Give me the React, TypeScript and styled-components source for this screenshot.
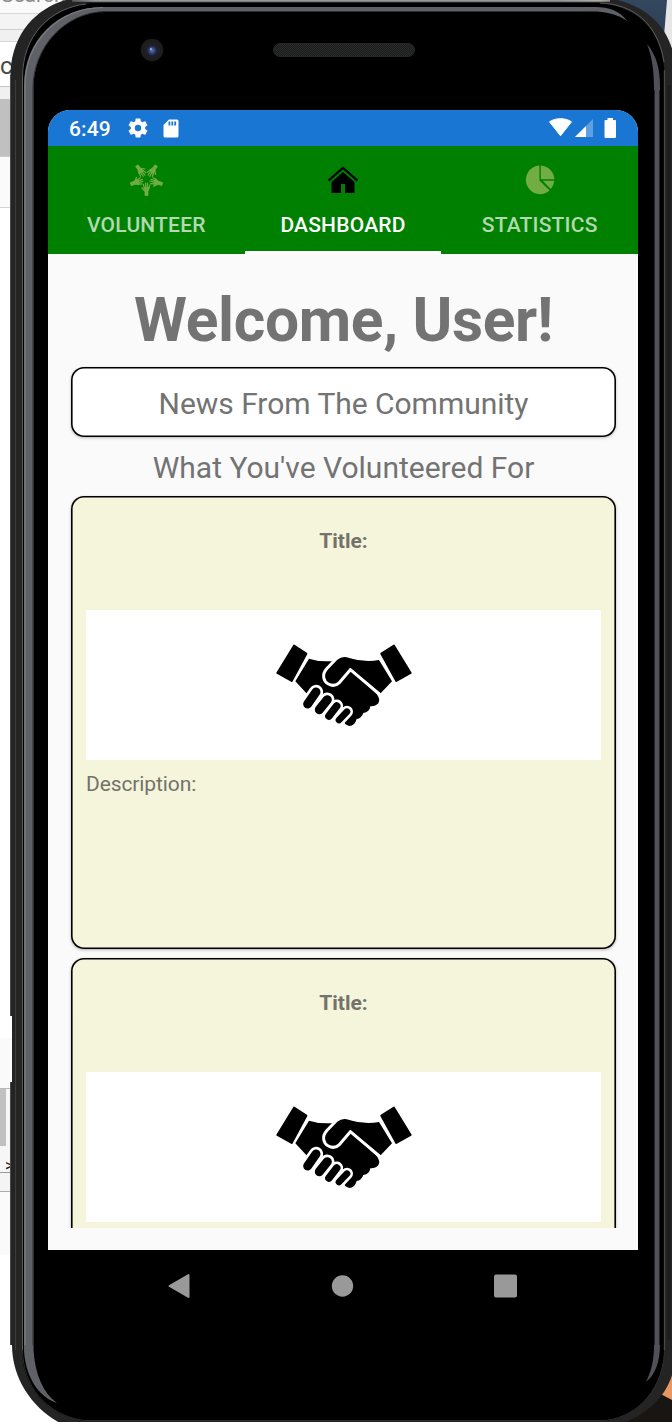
import React from "react";
import styled, { createGlobalStyle } from "styled-components";

const GlobalStyle = createGlobalStyle`
  * { box-sizing: border-box; }
  body { margin: 0; background: #fff; font-family: Roboto, sans-serif; }
`;

const Page = styled.div`
  position: relative;
  width: 672px;
  height: 1422px;
  overflow: hidden;
  background: #fff;
`;

/* Slice of the desktop window visible behind the device */
const WindowEdge = styled.div`
  position: absolute;
  left: 0;
  top: 0;
  width: 100px;
  display: flex;
  flex-direction: column;
`;

const Strip = styled.div<{ $h: number; $bg?: string; $line?: string }>`
  flex: none;
  height: ${(p) => p.$h}px;
  background: ${(p) => p.$bg ?? "#fff"};
  border-bottom: ${(p) => (p.$line ? `1px solid ${p.$line}` : "0")};
  overflow: hidden;
  color: #444;
  font: 22px/1 Roboto, sans-serif;
`;

const SearchText = styled.div`
  margin: -15px 0 0 1px;
  color: #8c8c8c;
  font-size: 21px;
  line-height: 21px;
`;

const EdgeText = styled.div`
  padding-top: 12px;
  font-size: 24px;
  color: #4a4a4a;
`;

const ScrollThumb = styled.div`
  width: 6px;
  height: 57px;
  background: #c0c0c0;
`;

const Arrow = styled.div`
  padding: 12px 0 0 5px;
  font-size: 16px;
  color: #222;
`;

const Shell = styled.svg`
  position: absolute;
  inset: 0;
`;

const Screen = styled.main`
  position: relative;
  width: 590px;
  height: 1140px;
  margin: 110px 0 0 48px;
  display: flex;
  flex-direction: column;
  overflow: hidden;
  border-radius: 22px 22px 0 0;
  background: #fafafa;
`;

const PageFlow = styled.div`
  display: flow-root;
`;

const StatusBar = styled.header`
  flex: none;
  display: flex;
  align-items: center;
  height: 36px;
  padding: 0 21px;
  background: #1976d2;
  color: #fff;
`;

const Clock = styled.span`
  width: 58px;
  font-size: 21px;
  font-weight: 500;
  line-height: 36px;
  letter-spacing: 0.1px;
  padding-top: 1px;
`;

const StatusIcons = styled.div<{ $right?: boolean }>`
  display: flex;
  align-items: center;
  gap: 14px;
  margin-left: ${(p) => (p.$right ? "auto" : "0")};
`;

const Tabs = styled.nav`
  flex: none;
  display: grid;
  grid-template-columns: repeat(3, 1fr);
  height: 108px;
  background: #008000;
`;

const Tab = styled.a<{ $active?: boolean }>`
  display: flex;
  flex-direction: column;
  align-items: center;
  padding-top: 16px;
  border-bottom: 3px solid ${(p) => (p.$active ? "#fff" : "transparent")};
  color: ${(p) => (p.$active ? "#fff" : "#b2d9b2")};
  font-size: 21px;
  font-weight: 500;
  line-height: 25px;
  letter-spacing: 0.2px;
  svg { display: block; margin-bottom: 15px; }
`;

const Feed = styled.section`
  flex: none;
  height: 974px;
  padding: 0 22px 0 23px;
  overflow: hidden;
  color: #737373;
  text-align: center;
`;

const Heading = styled.h1`
  margin: 31px 0 11px;
  font-size: 60.5px;
  line-height: 71px;
  font-weight: 700;
  letter-spacing: -0.33px;
  white-space: nowrap;
`;

const NewsCard = styled.div`
  height: 70px;
  border-radius: 13px;
  background: #fff;
  box-shadow: inset 0 0 0 1.6px #000, 0 1px 3px rgba(0, 0, 0, 0.25);
  font-size: 30px;
  line-height: 73px;
  letter-spacing: -0.03px;
`;

const Subheading = styled.h2`
  margin: 0;
  height: 59px;
  padding-top: 13px;
  font-size: 30px;
  line-height: 36px;
  font-weight: 400;
`;

const EventCard = styled.article`
  height: 453px;
  margin-bottom: 9px;
  padding: 33px 15px 0;
  border-radius: 13px;
  background: #f5f5dc;
  box-shadow: inset 0 0 0 1.6px #000, 0 1px 3px rgba(0, 0, 0, 0.3);
  color: #73736a;
`;

const EventTitle = styled.h3`
  margin: 0;
  height: 81px;
  font-size: 21px;
  line-height: 25px;
  font-weight: 700;
`;

const Picture = styled.div`
  display: flex;
  justify-content: center;
  align-items: center;
  height: 150px;
  padding-left: 2px;
  background: #fff;
`;

const Description = styled.p`
  margin: 12px 0 0;
  text-align: left;
  font-size: 21px;
  line-height: 25px;
  letter-spacing: -0.1px;
`;

const SystemNav = styled.footer`
  position: relative;
  display: flex;
  justify-content: space-between;
  align-items: center;
  width: 350px;
  height: 72px;
  margin-left: 168px;
`;

function DeviceShell() {
  return (
    <Shell width="672" height="1422" viewBox="0 0 672 1422">
      <defs>
        <linearGradient id="topRim" x1="60" x2="640" y1="0" y2="0" gradientUnits="userSpaceOnUse">
          <stop offset="0" stopColor="#333" />
          <stop offset="0.06" stopColor="#999" />
          <stop offset="0.86" stopColor="#999" />
          <stop offset="0.93" stopColor="#aaa" />
          <stop offset="1" stopColor="#333" />
        </linearGradient>
        <linearGradient id="photo" x1="0" x2="0" y1="0" y2="1">
          <stop offset="0" stopColor="#33475f" />
          <stop offset="1" stopColor="#263a50" />
        </linearGradient>
        <radialGradient id="lens">
          <stop offset="0" stopColor="#6675a8" />
          <stop offset="0.35" stopColor="#36477c" />
          <stop offset="0.65" stopColor="#182244" />
          <stop offset="0.8" stopColor="#1d1e24" />
          <stop offset="1" stopColor="#242424" />
        </radialGradient>
        <pattern id="mesh" width="2" height="2" patternUnits="userSpaceOnUse">
          <path d="M0 0h2v2H0z" fill="#191b1b" />
          <path d="M0 0h1v1H0zM1 1h1v1H1z" fill="#2b2d2d" />
        </pattern>
      </defs>
      <path d="M600 0H668L663 60H600z" fill="url(#photo)" />
      <path d="M667 0H672V60H662z" fill="#e6e6e6" />
      <path d="M620 1370H672V1422H620z" fill="#181513" />
      <path d="M655 1350H672V1400L655 1391z" fill="#e99762" />

      <path
        d="M10.500 72V1016H12V1082H10.500V1345H12C12 1380 34 1410 62 1424H620C650 1414 675 1390 675 1355V62C670 26 645 4 608 -2H74C42 4 13 28 10.500 72z"
        fill="#242424"
      />
      <path d="M10.500 75V1016M10.500 1082V1345" stroke="#4a4a4a" />
      <path d="M15.500 80V1350" stroke="#3b3b3b" />
      <path d="M669 85V1340" stroke="#1c1c1c" strokeWidth="3" />
      <path d="M72 0.600H610" fill="none" stroke="url(#topRim)" strokeWidth="2.500" />
      <path
        d="M22 1350V78C22 36 51 8 90 3H592C636 3 664 30 664.500 76V1345C664 1388 640 1416 606 1421H84C48 1416 22 1388 22 1350z"
        fill="#000"
      />
      <path d="M22.500 1350V78C22.500 34 51 8 86 4" fill="none" stroke="#5a5b5e" />
      <path d="M22.500 1350C23 1386 46 1415 84 1420.500H606C640 1416 664 1386 664.500 1350" fill="none" stroke="#2c2c2c" />
      <path d="M664.500 70V1350" fill="none" stroke="#494949" strokeWidth="1.300" />
      <path d="M600 3C634 4 658 24 664 62" fill="none" stroke="#5a5a5a" />
      <path
        d="M24 1350V86C24 40 58 7 103 7H595C609 7 620 11 627 21C617 14 606 11.500 592 11.500H106C64 12 33.500 48 33.500 88V1350C35 1374 43 1393 57 1403C36 1396 25 1373 24 1350z"
        fill="#606166"
      />
      <path d="M25 1345V86C25 42 58 8 103 7.500" fill="none" stroke="#7c7d81" strokeWidth="1.200" />
      <path d="M33 1345V88C33 48 64 12 106 11.500H590" fill="none" stroke="#2b2e33" />
      <path
        d="M647 44C657 56 660 70 660 86V1345C660 1362 655 1375 646 1382C652 1370 654 1358 654 1345V90C654 70 652 57 647 44z"
        fill="#505156"
      />
      <path d="M654.500 90V1345M659.500 90V1345" stroke="#242529" />

      <circle cx="152" cy="50" r="11.300" fill="#1d1d1d" />
      <circle cx="152" cy="50.500" r="7.500" fill="url(#lens)" />
      <circle cx="151" cy="49" r="1.200" fill="#8e9bc4" />
      <rect x="273.500" y="43.500" width="141" height="13" rx="6.500" fill="url(#mesh)" stroke="#262626" />
    </Shell>
  );
}

function GearIcon() {
  return (
    <svg width="22" height="22" viewBox="1 1 22 22" fill="#fff">
      <path d="M19.14 12.94c.04-.3.06-.61.06-.94s-.02-.64-.07-.94l2.03-1.58a.5.5 0 0 0 .12-.61l-1.92-3.32a.5.5 0 0 0-.59-.22l-2.39.96a7 7 0 0 0-1.62-.94l-.36-2.54a.5.5 0 0 0-.48-.41h-3.84a.5.5 0 0 0-.47.41l-.36 2.54c-.59.24-1.13.57-1.62.94l-2.39-.96a.5.5 0 0 0-.59.22L2.74 8.87a.5.5 0 0 0 .12.61l2.03 1.58a6 6 0 0 0 0 1.88l-2.03 1.58a.5.5 0 0 0-.12.61l1.92 3.32c.12.22.37.29.59.22l2.39-.96c.5.38 1.03.7 1.62.94l.36 2.54c.05.24.24.41.48.41h3.84c.24 0 .44-.17.47-.41l.36-2.54a7 7 0 0 0 1.62-.94l2.39.96c.22.08.47 0 .59-.22l1.92-3.32a.5.5 0 0 0-.12-.61zM12 15.2A3.2 3.2 0 1 1 12 8.8a3.200 3.200 0 0 1 0 6.400z" />
    </svg>
  );
}

function SdCardIcon() {
  return (
    <svg width="16" height="19" viewBox="0 0 16 19">
      <path d="M6 .5h8a1.500 1.500 0 0 1 1.500 1.500v15a1.500 1.500 0 0 1-1.500 1.500H2A1.500 1.500 0 0 1 .5 17V6z" fill="#fff" />
      <path d="M5.500 2.500h1.800v4H5.500zM8.400 2.500h1.800v4H8.400zM11.300 2.500h1.800v4h-1.800z" fill="#1976d2" />
    </svg>
  );
}

function SignalIcons() {
  return (
    <svg width="69" height="22" viewBox="0 0 69 22">
      <path d="M1.500 4.800C7.500.6 17.500.6 23.500 4.800L12.500 18.800z" fill="#fff" stroke="#fff" strokeLinejoin="round" />
      <path d="M45 2V20H27z" fill="#609fe0" />
      <path d="M38 9V20H27z" fill="#fff" />
      <path d="M59.500 1H65v2h2a1 1 0 0 1 1 1v16a1 1 0 0 1-1 1h-9.500a1 1 0 0 1-1-1V4a1 1 0 0 1 1-1h2z" fill="#fff" />
    </svg>
  );
}

function VolunteerIcon() {
  return (
    <svg width="36" height="36" viewBox="-18.500 -17 36 36">
      <defs>
        <g id="hand" stroke="#72ad43" fill="#72ad43" strokeLinecap="round" strokeLinejoin="round">
          <path d="M-2.600 8.800L-1.500 12.500V16.500H1.500V12.500L2.900 8.800z" strokeWidth=".8" />
          <path d="M-2 9.500L-3.200 5.400M-.7 9L-.9 4M.9 9L1.100 4.200M2.200 9.500L3.300 5.800M-1.400 12.300L-4.600 9" strokeWidth="1.200" />
        </g>
      </defs>
      {[0, 72, 144, 216, 288].map((turn) => (
        <use key={turn} href="#hand" transform={`rotate(${turn})`} />
      ))}
    </svg>
  );
}

function HomeIcon() {
  return (
    <svg width="36" height="36" viewBox="0 0 36 36">
      <path d="M3.500 18.700L18 6L32.500 18.700" fill="none" stroke="#000" strokeWidth="2.300" />
      <path d="M18 10L29.500 20V31H20V22H16V31H6.500V20z" fill="#000" />
    </svg>
  );
}

function PieIcon() {
  return (
    <svg width="36" height="36" viewBox="0 0 36 36" fill="#72ad43">
      <path d="M17.400 3.600V18.400L27.600 28.600A14.300 14.300 0 1 1 17.400 3.600z" />
      <path d="M18.800 3.600A14.300 14.300 0 0 1 32.300 17.200H18.800z" />
      <path d="M20.800 18.700H32.300A14.300 14.300 0 0 1 28.700 27.100z" />
    </svg>
  );
}

function Handshake() {
  const fingers = [
    { d: "M168 186L143 222", w: 27 },
    { d: "M202 209L178 239", w: 27 },
    { d: "M230 228L207 258", w: 23 },
    { d: "M261 245L237 270", w: 20 },
  ];
  return (
    <svg width="170" height="110" viewBox="0 0 510 330" strokeLinejoin="round" strokeLinecap="round">
      <path d="M102 47L139 71L95 153L52 129z" stroke="#000" strokeWidth="6" />
      <path d="M402 47L452 129L409 153L364 71z" stroke="#000" strokeWidth="6" />
      <path d="M147 86Q180 97 223 93L270 118L350 192Q362 207 355 220Q346 230 331 229Q329 246 310 249Q304 266 290 267Q284 288 268 288Q255 285 253 277L190 240L138 188L106 154z" />
      <path d="M357 90Q310 98 260 82Q245 79 232 89L202 120Q188 138 197 154Q216 174 235 159L271 115L362 190L396 154z" />
      <path d="M223 92L200 116C184 134 191 155 205 162C218 169 231 165 239 157L271 119L359 193" fill="none" stroke="#fff" strokeWidth="9" />
      {fingers.map((f) => (
        <path key={f.d} d={f.d} fill="none" stroke="#fff" strokeWidth={f.w + 16} />
      ))}
      {fingers.map((f) => (
        <path key={f.w + f.d} d={f.d} fill="none" stroke="#000" strokeWidth={f.w} />
      ))}
    </svg>
  );
}

function Event() {
  return (
    <EventCard>
      <EventTitle>Title:</EventTitle>
      <Picture>
        <Handshake />
      </Picture>
      <Description>Description:</Description>
    </EventCard>
  );
}

export default function App() {
  return (
    <Page>
      <GlobalStyle />
      <WindowEdge>
        <Strip $h={14} $bg="#fafafa" $line="#d8d8d8">
          <SearchText>Search</SearchText>
        </Strip>
        <Strip $h={16} $bg="#f4f4f4" $line="#d0d0d0" />
        <Strip $h={12} $bg="#f0f0f0" $line="#d8d8d8" />
        <Strip $h={45} $line="#c4c4c4">
          <EdgeText>c</EdgeText>
        </Strip>
        <Strip $h={12} $bg="#f0f0f0" />
        <Strip $h={58} $bg="#c0c0c0" $line="#ccc" />
        <Strip $h={51} $bg="#fafafa" $line="#d4d4d4" />
        <Strip $h={830} />
        <Strip $h={51} $bg="#fafafa" $line="#b8b8b8" />
        <Strip $h={84} $bg="#f6f6f6" $line="#999">
          <ScrollThumb />
          <Arrow>&gt;</Arrow>
        </Strip>
        <Strip $h={19} $bg="#f4f4f4" $line="#aaa" />
        <Strip $h={63} $bg="#fafafa" />
      </WindowEdge>
      <DeviceShell />
      <PageFlow>
        <Screen>
          <StatusBar>
            <Clock>6:49</Clock>
            <StatusIcons>
              <GearIcon />
              <SdCardIcon />
            </StatusIcons>
            <StatusIcons $right>
              <SignalIcons />
            </StatusIcons>
          </StatusBar>
          <Tabs>
            <Tab>
              <VolunteerIcon />
              VOLUNTEER
            </Tab>
            <Tab $active>
              <HomeIcon />
              DASHBOARD
            </Tab>
            <Tab>
              <PieIcon />
              STATISTICS
            </Tab>
          </Tabs>
          <Feed>
            <Heading>Welcome, User!</Heading>
            <NewsCard>News From The Community</NewsCard>
            <Subheading>What You've Volunteered For</Subheading>
            <Event />
            <Event />
          </Feed>
        </Screen>
        <SystemNav>
          <svg width="22" height="26" viewBox="0 0 22 26">
            <path d="M1.500 13L20.500 2V24z" fill="#999" stroke="#999" strokeWidth="2" strokeLinejoin="round" />
          </svg>
          <svg width="24" height="22" viewBox="0 0 24 22">
            <circle cx="12.500" cy="11" r="10.700" fill="#999" />
          </svg>
          <svg width="24" height="24" viewBox="0 0 24 24">
            <rect x="0" y=".5" width="23" height="23" rx="2" fill="#999" />
          </svg>
        </SystemNav>
      </PageFlow>
    </Page>
  );
}
